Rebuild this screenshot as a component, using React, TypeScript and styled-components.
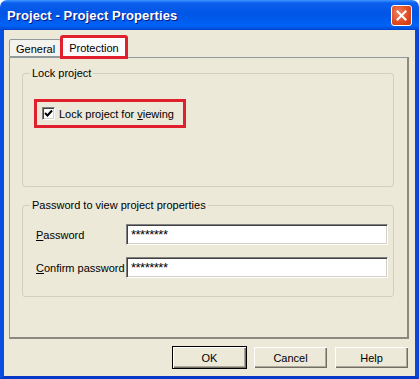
import React from "react";
import styled, { createGlobalStyle } from "styled-components";

const GlobalStyle = createGlobalStyle`
  html, body {
    margin: 0;
    padding: 0;
    background: #ffffff;
  }
  body {
    font-family: "Liberation Sans", Arial, sans-serif;
    font-size: 11px;
    color: #000;
  }
`;

const Window = styled.div`
  width: 419px;
  height: 379px;
  display: flex;
  flex-direction: column;
  overflow: hidden;
`;

const TitleBar = styled.div`
  height: 30px;
  flex: none;
  display: flex;
  align-items: center;
  justify-content: space-between;
  padding: 0 7px 0 7px;
  border-radius: 7px 7px 0 0;
  background: linear-gradient(
    #3d95ff 0%,
    #0a5fef 10%,
    #0055e5 45%,
    #0062f6 85%,
    #0052e0 95%,
    #003cc8 100%
  );
`;

const Title = styled.div`
  color: #fff;
  font-weight: bold;
  font-size: 13px;
  letter-spacing: 0.1px;
  text-shadow: 1px 1px 0 #0a1883;
  margin-top: 1px;
`;

const CloseButton = styled.div`
  width: 19px;
  height: 19px;
  border: 1px solid #fff;
  border-radius: 3px;
  background: radial-gradient(circle at 35% 35%, #f08060, #e0481f 60%, #c23a10);
  display: flex;
  align-items: center;
  justify-content: center;
`;

const Body = styled.div`
  flex: 1;
  display: flex;
  flex-direction: column;
  background: #ece9d8;
  border-left: 4px solid #0a50e0;
  border-right: 4px solid #0a46d8;
  border-bottom: 3px solid #0638c8;
  padding: 6px 6px 0 5px;
`;

const TabRow = styled.div`
  display: flex;
  align-items: flex-end;
  height: 21px;
  position: relative;
  z-index: 1;
`;

const Tab = styled.div<{ $active?: boolean; $marked?: boolean }>`
  height: ${(p) => (p.$active ? 22 : 18)}px;
  margin-bottom: ${(p) => (p.$active ? -1 : 0)}px;
  padding: 0 ${(p) => (p.$active ? 7 : 5)}px 0 ${(p) => (p.$active ? 7 : 6)}px;
  display: flex;
  align-items: center;
  box-sizing: border-box;
  background: ${(p) => (p.$active ? "#fcfcfe" : "#f4f3ee")};
  border: 1px solid #919b9c;
  border-bottom: ${(p) => (p.$active ? "none" : "1px solid #919b9c")};
  border-radius: 2px 2px 0 0;
  padding-top: ${(p) => (p.$active ? 0 : 2)}px;
  outline: ${(p) => (p.$marked ? "3px solid #e0202c" : "none")};
  outline-offset: -2px;
`;

const Panel = styled.div`
  height: 282px;
  box-sizing: border-box;
  background: #ece9d8;
  border: 1px solid #919b9c;
  border-right: 2px solid #8a8a80;
  border-bottom: 2px solid #8a8a80;
  padding: 9px 13px 0 12px;
  display: flex;
  flex-direction: column;
  gap: 12px;
`;

const Group = styled.fieldset<{ $h: number }>`
  margin: 0;
  height: ${(p) => p.$h}px;
  box-sizing: border-box;
  border: 1px solid #d0d0bf;
  border-radius: 3px;
  padding: 0 0 0 11px;
  min-inline-size: 0;
`;

const Legend = styled.legend`
  padding: 0 2px;
  margin-left: -4px;
  line-height: 13px;
`;

const Marked = styled.div`
  display: inline-flex;
  align-items: center;
  gap: 4px;
  margin-top: 19px;
  padding: 5px 9px 5px 5px;
  border: 3px solid #e0202c;
`;

const Check = styled.span`
  width: 13px;
  height: 13px;
  box-sizing: border-box;
  background: #fff;
  border-top: 1px solid #808080;
  border-left: 1px solid #808080;
  border-right: 1px solid #fff;
  border-bottom: 1px solid #fff;
  box-shadow: inset 1px 1px 0 #404040, inset -1px -1px 0 #d4d0c8;
  display: flex;
  align-items: center;
  justify-content: center;
`;

const U = styled.span`
  text-decoration: underline;
`;

const FieldRow = styled.div<{ $top: number }>`
  display: flex;
  align-items: center;
  margin-top: ${(p) => p.$top}px;
`;

const Label = styled.label`
  width: 90px;
  flex: none;
  padding-left: 2px;
`;

const Input = styled.div`
  width: 262px;
  height: 21px;
  box-sizing: border-box;
  background: #fff;
  border-top: 1px solid #808080;
  border-left: 1px solid #808080;
  border-right: 1px solid #fff;
  border-bottom: 1px solid #fff;
  box-shadow: inset 1px 1px 0 #404040, inset -1px -1px 0 #d4d0c8;
  padding: 3px 0 0 4px;
  font-size: 13px;
  line-height: 14px;
  letter-spacing: -0.5px;
`;

const ButtonRow = styled.div`
  display: flex;
  justify-content: flex-end;
  gap: 6px;
  margin-top: 7px;
`;

const Button = styled.div<{ $default?: boolean }>`
  width: 75px;
  height: 23px;
  box-sizing: border-box;
  display: flex;
  align-items: center;
  justify-content: center;
  background: #ece9d8;
  border: 1px solid ${(p) => (p.$default ? "#000" : "#ece9d8")};
  box-shadow: inset 1px 1px 0 #fff, inset -1px -1px 0 #716f64,
    inset -2px -2px 0 #aca899;
`;

export default function App() {
  return (
    <>
      <GlobalStyle />
      <Window>
        <TitleBar>
          <Title>Project - Project Properties</Title>
          <CloseButton>
            <svg width="11" height="11" viewBox="0 0 11 11">
              <path
                d="M1.5 1.5 L9.5 9.5 M9.5 1.5 L1.5 9.5"
                stroke="#fff"
                strokeWidth="2"
                strokeLinecap="square"
              />
            </svg>
          </CloseButton>
        </TitleBar>
        <Body>
          <TabRow>
            <Tab>General</Tab>
            <Tab $active $marked>
              Protection
            </Tab>
          </TabRow>
          <Panel>
            <Group $h={120}>
              <Legend>Lock project</Legend>
              <Marked>
                <Check>
                  <svg width="9" height="9" viewBox="0 0 9 9">
                    <path
                      d="M1 4 L3.5 6.5 L8 1.5"
                      stroke="#000"
                      strokeWidth="2"
                      fill="none"
                    />
                  </svg>
                </Check>
                <span>
                  Lock project for <U>v</U>iewing
                </span>
              </Marked>
            </Group>
            <Group $h={98}>
              <Legend>Password to view project properties</Legend>
              <FieldRow $top={12}>
                <Label>
                  <U>P</U>assword
                </Label>
                <Input>********</Input>
              </FieldRow>
              <FieldRow $top={12}>
                <Label>
                  <U>C</U>onfirm password
                </Label>
                <Input>********</Input>
              </FieldRow>
            </Group>
          </Panel>
          <ButtonRow>
            <Button $default>OK</Button>
            <Button>Cancel</Button>
            <Button>Help</Button>
          </ButtonRow>
        </Body>
      </Window>
    </>
  );
}
